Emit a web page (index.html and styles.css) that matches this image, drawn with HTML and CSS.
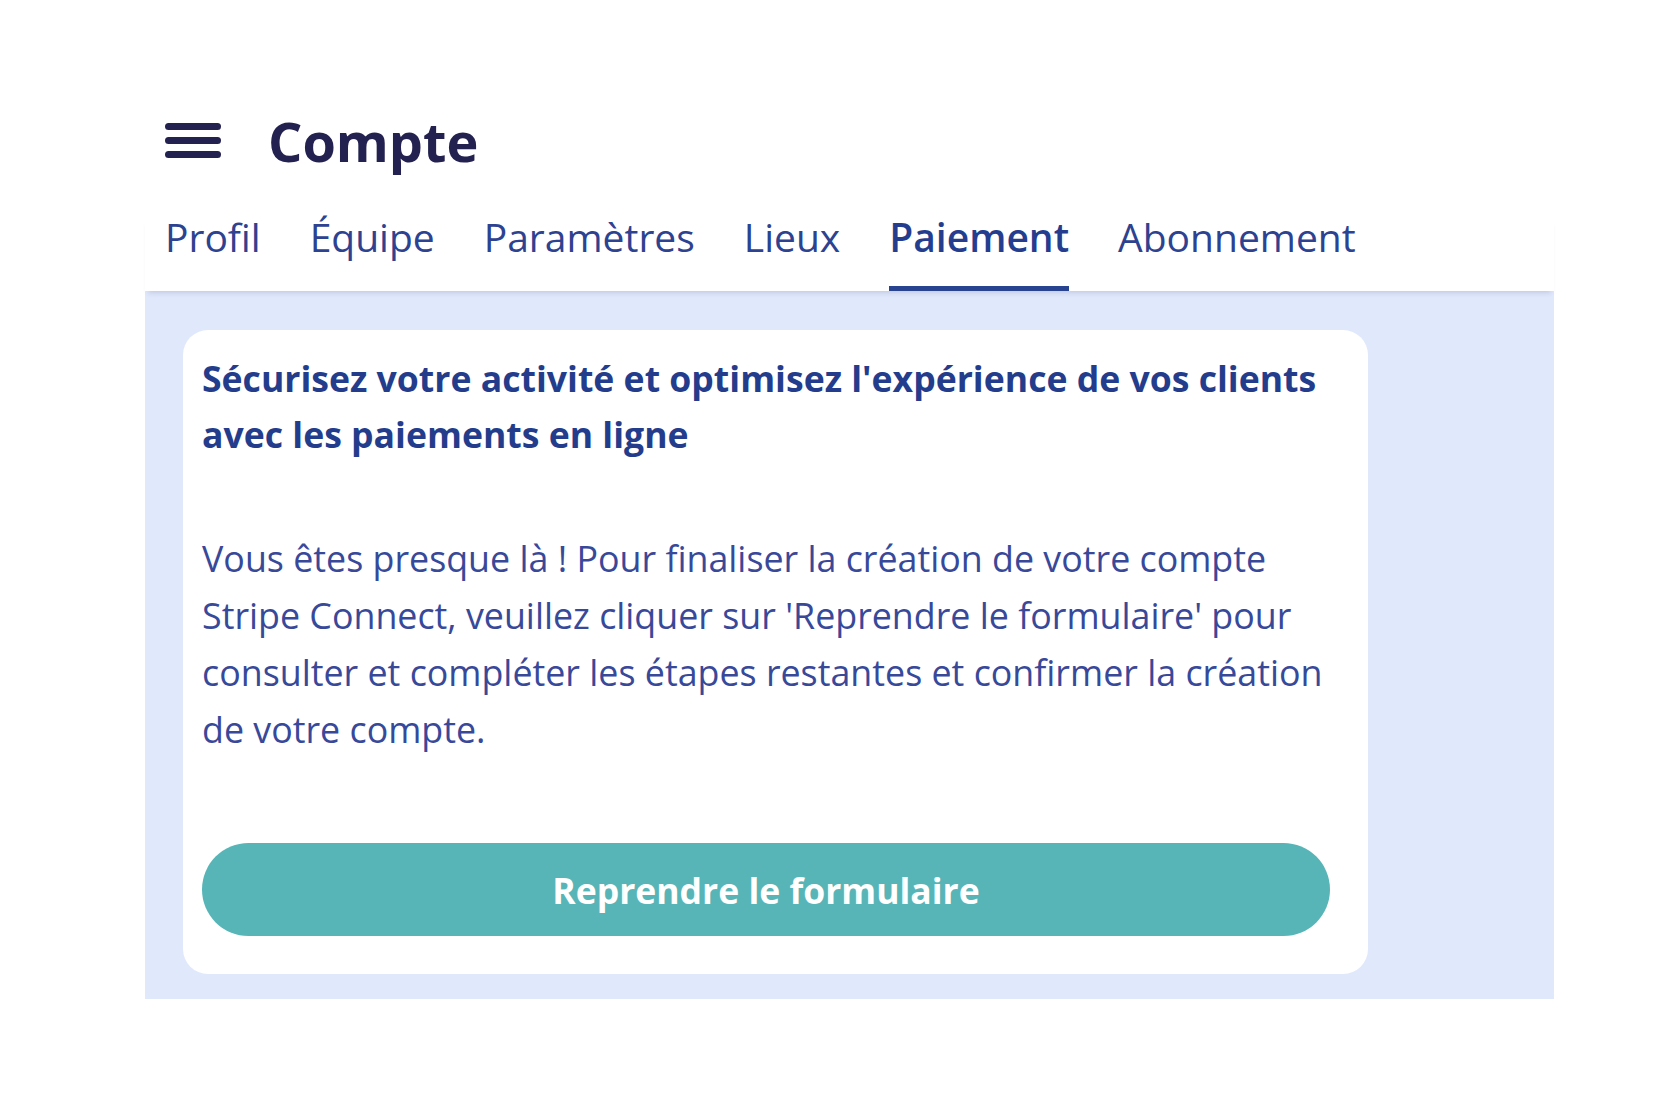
FILE: index.html
```html
<!DOCTYPE html>
<html lang="fr">
  <head>
    <meta charset="UTF-8" />
    <title>Compte - Paiement</title>
    <meta name="viewport" content="width=device-width, initial-scale=1" />
    <link rel="stylesheet" href="styles.css">
  </head>
  <body>
    <div class="page">
      <header class="topbar">
        <button class="menu-btn" aria-label="Menu">
          <svg width="56" height="36" viewBox="0 0 56 36">
            <line x1="3.5" y1="3.5" x2="52.5" y2="3.5" />
            <line x1="3.5" y1="17.5" x2="52.5" y2="17.5" />
            <line x1="3.5" y1="31.5" x2="52.5" y2="31.5" />
          </svg>
        </button>
        <h1>Compte</h1>
      </header>

      <nav class="tabs">
        <a href="#">Profil</a>
        <a href="#">Équipe</a>
        <a href="#">Paramètres</a>
        <a href="#">Lieux</a>
        <a href="#" class="active">Paiement</a>
        <a href="#">Abonnement</a>
      </nav>

      <main class="content">
        <section class="card">
          <h2>Sécurisez votre activité et optimisez l'expérience de vos clients avec les paiements en ligne</h2>
          <p>Vous êtes presque là ! Pour finaliser la création de votre compte Stripe Connect, veuillez cliquer sur 'Reprendre le formulaire' pour consulter et compléter les étapes restantes et confirmer la création de votre compte.</p>
          <button class="resume-btn">Reprendre le formulaire</button>
        </section>
      </main>
    </div>
  </body>
</html>
```

FILE: styles.css
```css
body {
  font-family: "Open Sans", "Noto Sans", sans-serif;
  margin: 0;
  padding: 0;
  background: #fff;
}
.page {
  width: 1409px;
  margin-left: 145px;
  padding-top: 114px;
}
.topbar {
  display: flex;
  align-items: center;
  gap: 47px;
  padding-left: 20px;
  margin-bottom: 49px;
}
.menu-btn {
  display: flex;
  padding: 0;
  border: none;
  background: none;
  cursor: pointer;
}
.menu-btn line {
  stroke: #22214f;
  stroke-width: 7;
  stroke-linecap: round;
}
h1 {
  margin: 0;
  font-size: 54px;
  line-height: 1;
  font-weight: 700;
  color: #22214f;
}
.tabs {
  position: relative;
  z-index: 1;
  display: flex;
  gap: 49px;
  padding-left: 20px;
  box-shadow: 0 5px 5px -3px rgba(40, 50, 90, 0.16);
  background: #fff;
}
.tabs a {
  font-size: 39px;
  line-height: 1;
  color: #2d4290;
  text-decoration: none;
  padding-bottom: 30px;
  border-bottom: 5px solid transparent;
}
.tabs a.active {
  font-weight: 600;
  color: #253d8f;
  border-bottom-color: #28438f;
}
.content {
  background: #e0e8fc;
  padding: 39px 0 25px 38px;
}
.card {
  width: 1185px;
  box-sizing: border-box;
  background: #fff;
  border-radius: 25px;
  padding: 20px 26px 38px 19px;
}
h2 {
  margin: 0;
  font-size: 35.6px;
  line-height: 56px;
  font-weight: 700;
  color: #233d8c;
}
.card p {
  margin: 68px 0 0;
  font-size: 35.8px;
  line-height: 57px;
  color: #38499a;
}
.resume-btn {
  display: block;
  width: calc(100% - 12px);
  height: 93px;
  margin-top: 85px;
  border: none;
  border-radius: 47px;
  background: #57b5b7;
  color: #fff;
  font-family: inherit;
  font-size: 35.5px;
  font-weight: 700;
  cursor: pointer;
}
```
